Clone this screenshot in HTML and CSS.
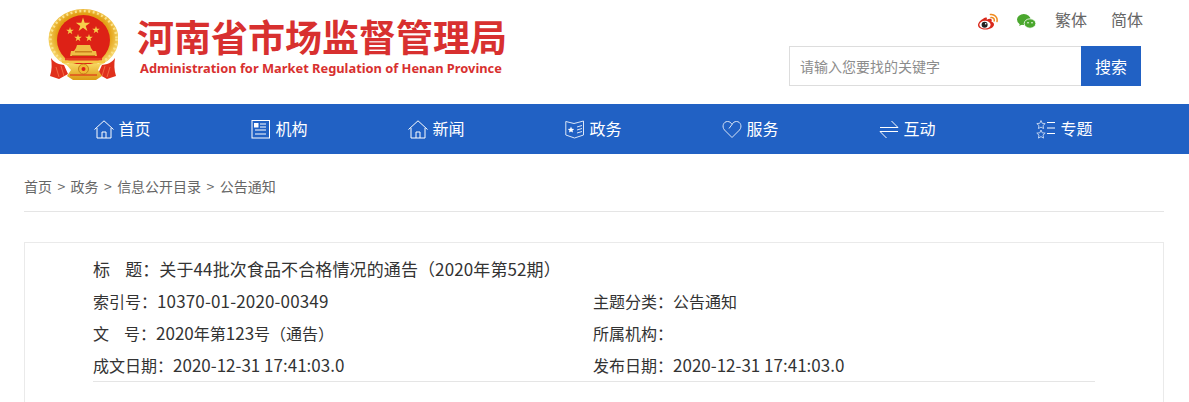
FILE: index.html
```html
<!DOCTYPE html>
<html lang="zh-CN">
<head>
<meta charset="utf-8">
<title>关于44批次食品不合格情况的通告</title>
<link rel="stylesheet" href="styles.css">
</head>
<body>
<header class="top">
  <div class="brand">
    <svg class="emblem" width="70" height="71" viewBox="0 0 70 71">
      <defs>
        <radialGradient id="gold" cx="50%" cy="45%" r="52%"><stop offset="0.72" stop-color="#e3a015"/><stop offset="1" stop-color="#f6d569"/></radialGradient>
        <linearGradient id="swag" x1="0" y1="0" x2="0" y2="1"><stop offset="0" stop-color="#f7d65f"/><stop offset="1" stop-color="#dc9a14"/></linearGradient>
        <polygon id="s" points="0,-1 .225,-.309 .951,-.309 .363,.118 .588,.809 0,.382 -.588,.809 -.363,.118 -.951,-.309 -.225,-.309" fill="#f6cf4a"/>
      </defs>
      <ellipse cx="35.500" cy="30" rx="35" ry="30" fill="url(#gold)"/>
      <ellipse cx="35.500" cy="30" rx="33" ry="28" fill="none" stroke="#fbe38a" stroke-width="2.500" stroke-dasharray="2 2.500"/>
      <ellipse cx="35.500" cy="31" rx="26.500" ry="25" fill="#dd2116"/>
      <use href="#s" transform="translate(35 16) scale(7.500)"/>
      <use href="#s" transform="translate(22 22) scale(4)"/>
      <use href="#s" transform="translate(48 21) scale(4)"/>
      <use href="#s" transform="translate(30 29) scale(4)"/>
      <use href="#s" transform="translate(41 29) scale(4)"/>
      <path d="M29 36h13l1 3 2 3h3l1 5H22l1-5h3l2-3z" fill="#f0bd45"/>
      <path d="M27 42h17v1.500H27zM24 46h23v1H24z" fill="#c9811c"/>
      <rect x="17" y="49" width="37" height="2.500" fill="#e63a22"/>
      <rect x="14" y="51.500" width="43" height="2.500" fill="#f3c643"/>
      <path d="M3 49c2 3 5 6 13 7l4 9-9 5-9-3c2-6 2-12 1-18z" fill="#e0301c"/>
      <path d="M67 49c-2 3-5 6-13 7l-4 9 9 5 9-3c-2-6-2-12-1-18z" fill="#e0301c"/>
      <path d="M8 58l3 10M13 57l3 10M62 58l-3 10M57 57l-3 10" stroke="#f26a45" stroke-width="1" fill="none"/>
      <path d="M18 55h35l-3 6 4 6-6 4H25l-6-4 4-6z" fill="url(#swag)"/>
      <circle cx="35.500" cy="60" r="5" fill="#efb933" stroke="#c8801a"/>
      <circle cx="35.500" cy="60" r="2" fill="#dd2116"/>
      <path d="M22 66h27" stroke="#dd2116" stroke-width="1"/>
    </svg>
    <div class="brand-text">
      <div class="brand-cn">河南省市场监督管理局</div>
      <div class="brand-en">Administration for Market Regulation of Henan Province</div>
    </div>
  </div>
  <div class="tools">
    <div class="links">
      <svg class="social" width="21" height="18" viewBox="0 0 21 18">
        <path d="M8.600 5.400C4.800 6.800 1 10.200 1 13c0 2.800 3.500 4.500 7.500 4.500 5 0 8.500-2.600 8.500-5 0-1.700-1.600-2.400-2.500-2.700.5-1.300.4-2.400-.4-2.800-1.100-.5-3 .1-4.400.8.300-1 .3-1.900-.2-2.200-.3-.2-.7-.2-1.200.1z" fill="#d9291c"/>
        <ellipse cx="8" cy="12.700" rx="5.600" ry="3.900" fill="#fff"/>
        <circle cx="7.600" cy="12.700" r="3" fill="#222"/>
        <circle cx="8.700" cy="11.800" r=".8" fill="#fff"/>
        <path d="M14 5.500a2.800 2.800 0 0 1 3.200 3.400M13.400 2.500a5.800 5.800 0 0 1 6.600 7" fill="none" stroke="#f08a1d" stroke-width="1.500" stroke-linecap="round"/>
      </svg>
      <svg class="social wechat" width="19" height="15" viewBox="0 0 19 15">
        <ellipse cx="6.800" cy="5.600" rx="6.800" ry="5.500" fill="#4aa72e"/>
        <path d="M3 9l-.8 3 3.300-1.800z" fill="#4aa72e"/>
        <ellipse cx="13" cy="9.500" rx="5.800" ry="4.700" fill="#4aa72e" stroke="#fff" stroke-width=".8"/>
        <circle cx="11" cy="8.700" r=".8" fill="#fff"/><circle cx="15" cy="8.700" r=".8" fill="#fff"/>
      </svg>
      <a class="lang">繁体</a>
      <a class="lang">简体</a>
    </div>
    <form class="search">
      <input class="search-input" type="text" placeholder="请输入您要找的关键字">
      <button class="search-btn" type="button">搜索</button>
    </form>
  </div>
</header>

<nav class="nav">
  <a class="nav-item">
    <svg width="20" height="19" viewBox="0 0 20 19" class="ic"><path d="M.5 9.500 10 .8l9.500 8.700M3 8v10h14V8M8 18v-6h4v6"/></svg><span class="nav-label">首页</span></a>
  <a class="nav-item">
    <svg width="20" height="19" viewBox="0 0 20 19" class="ic"><rect x="1" y=".5" width="17.500" height="17.500"/><path d="M9 4h6M9 7h6M4 10h11M4 14h11"/><rect x="3.500" y="3.500" width="3.500" height="3.500" fill="#fff"/></svg><span class="nav-label">机构</span></a>
  <a class="nav-item">
    <svg width="20" height="19" viewBox="0 0 20 19" class="ic"><path d="M.5 9.500 10 .8l9.500 8.700M3 8v10h14V8M8 18v-6h4v6"/></svg><span class="nav-label">新闻</span></a>
  <a class="nav-item">
    <svg width="20" height="19" viewBox="0 0 20 19" class="ic icdim"><path d="M.8 1.500 9 3.500l9.500-2.500v14l-9 3-8.700-3zM12 7l5-1.500M12 10l5-1.500M12 13l5-1.500"/><polygon points="6,6.500 6.900,8.700 9.200,8.900 7.500,10.400 8,12.600 6,11.500 4,12.600 4.500,10.400 2.800,8.900 5.100,8.700" fill="#fff" stroke="none"/></svg><span class="nav-label">政务</span></a>
  <a class="nav-item">
    <svg width="20" height="19" viewBox="0 0 20 19" class="ic icdim"><path d="M10 17.500 2.500 10C-.5 6.500 1.500 1.500 5.500 1.500c2 0 3.500 1 4.500 3L7 8.500M10 4.500c1-2 2.500-3 4.500-3 4 0 6 5 3 8.500L10 17.500"/></svg><span class="nav-label">服务</span></a>
  <a class="nav-item">
    <svg width="20" height="19" viewBox="0 0 20 19" class="ic"><path d="M1 7.500h18L12.500 1M19 11.500H1L7.500 18"/></svg><span class="nav-label">互动</span></a>
  <a class="nav-item">
    <svg width="20" height="19" viewBox="0 0 20 19" class="ic"><g class="icstar"><polygon points="5,.5 6.200,3.300 9.200,3.600 7,5.600 7.600,8.600 5,7.100 2.400,8.600 3,5.600 .8,3.600 3.800,3.300"/><polygon points="5,10 6.200,12.800 9.200,13.100 7,15.100 7.600,18.100 5,16.600 2.400,18.100 3,15.100 .8,13.100 3.800,12.800"/></g><path d="M11 2.500h8M11 8h8M11 13.500h8"/></svg><span class="nav-label">专题</span></a>
</nav>

<main class="page">
  <div class="crumbs">
    <a>首页</a><span class="sep">&gt;</span><a>政务</a><span class="sep">&gt;</span><a>信息公开目录</a><span class="sep">&gt;</span><a>公告通知</a>
  </div>
  <section class="card">
    <div class="meta">
      <div class="row title"><span class="gap-label">标<i></i>题：</span>关于44批次食品不合格情况的通告（2020年第52期）</div>
      <div class="row"><span class="cell">索引号：<span class="val wide">10370-01-2020-00349</span></span><span class="cell">主题分类：公告通知</span></div>
      <div class="row"><span class="cell"><span class="gap-label">文<i></i>号：</span><span class="val">2020</span>年第<span class="val">123</span>号（通告）</span><span class="cell">所属机构：</span></div>
      <div class="row"><span class="cell">成文日期：<span class="val">2020-12-31 17:41:03.0</span></span><span class="cell">发布日期：<span class="val">2020-12-31 17:41:03.0</span></span></div>
    </div>
  </section>
</main>
</body>
</html>
```

FILE: styles.css
```css
html, body { margin: 0; padding: 0; }
html { height: 402px; overflow: hidden; }
body {
  font-family: "Noto Sans CJK SC", "Noto Sans", sans-serif;
  color: #333;
  background: #fff;
  height: 402px;
  overflow: hidden;
}
a { text-decoration: none; color: inherit; }

.top {
  height: 104px;
  display: flex;
  justify-content: space-between;
  box-sizing: border-box;
}
.brand { display: flex; padding: 9px 0 0 48px; align-items: flex-start; }
.emblem { display: block; }
.brand-text { margin-left: 19px; padding-top: 4px; }
.brand-cn {
  color: #d8302f;
  font-size: 37px;
  font-weight: 700;
  line-height: 46px;
  white-space: nowrap;
}
.brand-en {
  color: #d8302f;
  font-family: "Noto Sans", sans-serif;
  font-size: 12.850px;
  font-weight: 700;
  line-height: 18px;
  margin-left: 3px;
  white-space: nowrap;
}

.tools { width: 400px; padding-top: 8px; box-sizing: border-box; }
.links { display: flex; align-items: center; height: 26px; padding-left: 188px; font-size: 16px; color: #666; }
.social { display: block; flex: none; }
.wechat { margin-left: 19px; }
.lang { margin-left: 24px; line-height: 26px; white-space: nowrap; position: relative; top: -2px; }
.wechat + .lang { margin-left: 19px; }

.search { display: flex; margin-top: 12px; }
.search-input {
  width: 292px;
  height: 40px;
  box-sizing: border-box;
  border: 1px solid #ddd;
  border-right: 0;
  padding: 0 10px;
  font: 14px "Noto Sans CJK SC", sans-serif;
  outline: 0;
  color: #333;
}
.search-input::placeholder { color: #8c8c8c; opacity: 1; }
.search-btn {
  width: 60px;
  height: 40px;
  border: 0;
  background: #2161c4;
  color: #fff;
  font: 16px "Noto Sans CJK SC", sans-serif;
  padding: 0;
}

.nav {
  height: 50px;
  background: #2161c4;
  display: grid;
  grid-template-columns: repeat(7, 157px);
  padding-left: 94px;
}
.nav-item {
  display: flex;
  align-items: center;
  gap: 4.500px;
  color: #fff;
  font-size: 16px;
}
.nav-label { padding-bottom: 2px; }
.ic { fill: none; stroke: #fff; stroke-width: 1; flex: none; display: block; }
.icdim { stroke: #dbe6f7; }
.icstar { stroke: #bcd0ef; }

.page { padding: 0 25px 0 24px; }
.crumbs {
  height: 58px;
  box-sizing: border-box;
  padding-top: 21px;
  border-bottom: 1px solid #e5e5e5;
  font-size: 14px;
  line-height: 22px;
  color: #666;
}
.sep { margin: 0 5.400px; }

.card {
  margin-top: 30px;
  border: 1px solid #eaeaea;
  border-bottom: 0;
  height: 160px;
  box-sizing: border-box;
  padding: 11px 68px 0 68px;
}
.meta { border-bottom: 1px solid #e5e5e5; height: 128px; box-sizing: border-box; }
.row {
  display: flex;
  height: 32px;
  line-height: 30px;
  font-size: 16px;
  color: #333;
  white-space: nowrap;
}
.title { display: block; font-size: 17px; letter-spacing: .11px; }
.cell { display: block; width: 500px; }
.val { font-size: 17px; }
.wide { letter-spacing: .15px; }
.gap-label i { display: inline-block; width: 15px; }
```
